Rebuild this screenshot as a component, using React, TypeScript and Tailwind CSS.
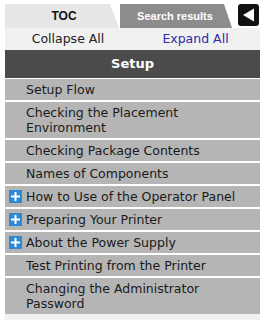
import React from "react";

const items: { label: string; plus?: boolean }[] = [
  { label: "Setup Flow" },
  { label: "Checking the Placement Environment" },
  { label: "Checking Package Contents" },
  { label: "Names of Components" },
  { label: "How to Use of the Operator Panel", plus: true },
  { label: "Preparing Your Printer", plus: true },
  { label: "About the Power Supply", plus: true },
  { label: "Test Printing from the Printer" },
  { label: "Changing the Administrator Password" },
];

function Plus() {
  return (
    <svg width="13" height="13" viewBox="0 0 13 13" className="shrink-0">
      <rect x="0" y="0" width="13" height="13" fill="#2a8ad8" />
      <rect x="2" y="5.5" width="9" height="2" fill="#fff" />
      <rect x="5.5" y="2" width="2" height="9" fill="#fff" />
    </svg>
  );
}

export default function App() {
  return (
    <div
      className="w-[266px] h-[320px] bg-white overflow-hidden"
      style={{ fontFamily: "'DejaVu Sans', Verdana, sans-serif" }}
    >
      <div className="ml-[5px] w-[255px]">
        <div className="flex items-end h-[28px] pt-[4px]">
          <div className="w-[114px] h-[24px] bg-[#e6e6e6] [clip-path:polygon(0_0,105px_0,114px_100%,0_100%)] flex items-center justify-center pl-[4px] text-[12px] font-bold text-[#111] font-['Liberation_Sans',Arial,sans-serif]">
            TOC
          </div>
          <div className="ml-[1px] w-[112px] h-[24px] bg-[#8c8c8c] [clip-path:polygon(0_0,104px_0,112px_100%,0_100%)] flex items-center justify-center pr-[2px] text-[11px] font-bold text-white font-['Liberation_Sans',Arial,sans-serif]">
            Search results
          </div>
          <div className="ml-[6px] mb-[2px] w-[21px] h-[22px] rounded-[3px] bg-[#111] flex items-center justify-center">
            <svg width="13" height="14" viewBox="0 0 13 14">
              <polygon points="1,7 12,0.5 12,13.5" fill="#fff" />
            </svg>
          </div>
        </div>
        <div className="h-[22px] bg-[#f1f1f1] flex items-center text-[12.5px]">
          <div className="w-[126px] text-center text-[#222]">Collapse All</div>
          <div className="flex-1 text-center text-[#2b2ba8]">Expand All</div>
        </div>
        <div className="h-[28px] bg-[#4b4b4b] flex items-center justify-center text-white font-bold text-[13px]">
          Setup
        </div>
        <div className="flex flex-col gap-[2px] pt-[1px] bg-white">
          {items.map((it) => (
            <div
              key={it.label}
              className="bg-[#b5b5b5] flex items-start pl-[4px] pr-[8px] py-[3px] text-[12.5px] leading-[15px] text-[#1a1a1a]"
            >
              <div className="w-[17px] shrink-0 pt-[1px]">{it.plus ? <Plus /> : null}</div>
              <div>{it.label}</div>
            </div>
          ))}
        </div>
        <div className="h-[10px] bg-[#f1f1f1]" />
      </div>
    </div>
  );
}
